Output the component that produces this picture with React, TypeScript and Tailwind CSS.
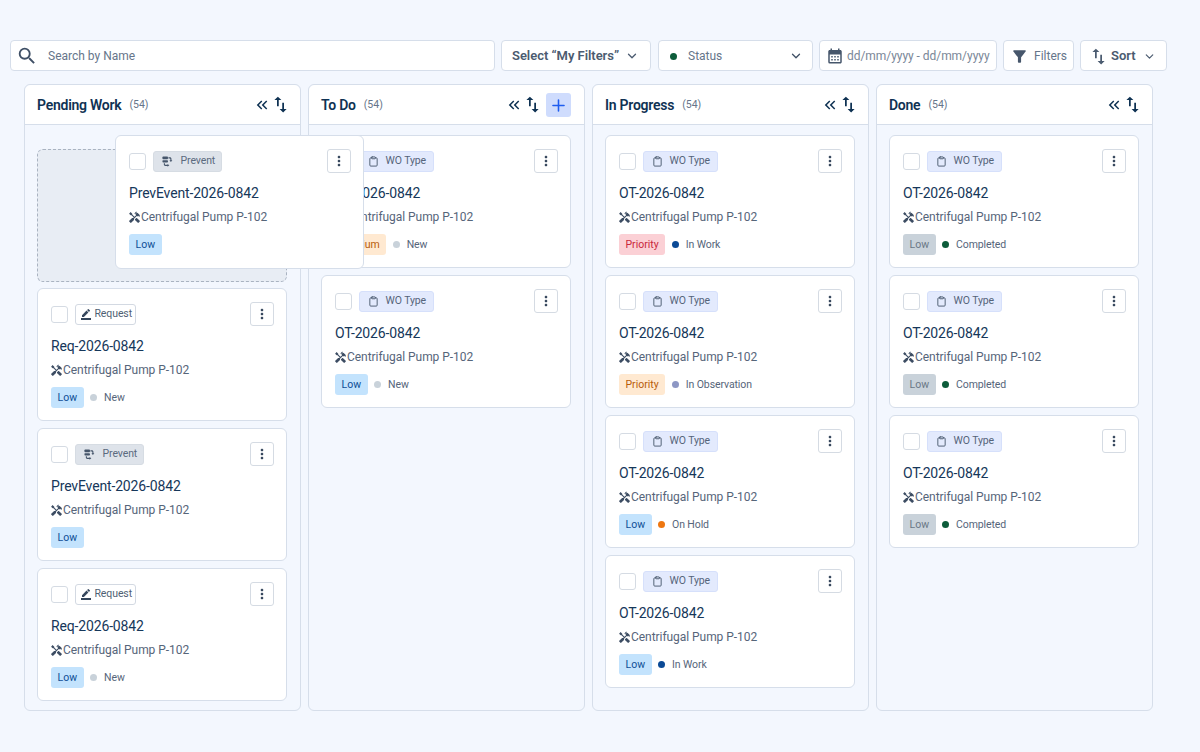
import React from "react";
import { ChevronDown, Plus, Clipboard } from "lucide-react";
import { MdSearch, MdCalendarMonth, MdFilterAlt, MdHandyman, MdBorderColor, MdMoreVert, MdKeyboardDoubleArrowLeft, MdSwapVert } from "react-icons/md";

const PreventIcon = () => (
  <svg width="11" height="11" viewBox="0 0 12 12" fill="#46566b" className="shrink-0">
    <rect x="0.5" y="0.5" width="6" height="3" rx="0.8" />
    <rect x="0.5" y="4.5" width="6" height="2.6" rx="0.8" />
    <path d="M8 1.2h1.6c1 0 1.7.7 1.7 1.7v1.4h1l-1.6 2-1.6-2h1V3c0-.3-.2-.5-.5-.5H8z" transform="translate(-1 .2)" />
    <path d="M6 10.8H3.6c-1 0-1.6-.6-1.6-1.5V8h1.2v1.2c0 .2.2.4.4.4H6V8.6l2 1.6-2 1.6z" />
  </svg>
);

type Card = { type: "wo" | "req" | "prev"; title: string; prio: string; status?: string; dot?: string };

const prioStyles: Record<string, string> = {
  Low: "bg-[#c3e3fd] text-[#0f4f96]",
  Grey: "bg-[#c9d2da] text-[#6a7886]",
  Priority: "bg-[#fbd0d5] text-[#c9283c]",
  Amber: "bg-[#ffe9d1] text-[#b85c0a]",
  Medium: "bg-[#ffe9d1] text-[#b85c0a]",
};

const TypeTag = ({ type }: { type: Card["type"] }) => {
  if (type === "req")
    return (
      <div className="flex h-[21px] w-[61px] items-center gap-[3px] rounded-[3px] border border-[#d3d9e2] bg-white pl-[4px] text-[10.5px] tracking-[-0.1px] text-[#4f5f74]">
        <MdBorderColor size={12} className="text-[#35465c]" />
        <span>Request</span>
      </div>
    );
  if (type === "prev")
    return (
      <div className="flex h-[21px] w-[69px] items-center gap-[8px] rounded-[3px] border border-[#d6dce3] bg-[#dee3ea] pl-[8px] text-[10.5px] tracking-[-0.1px] text-[#5b6a7e]">
        <PreventIcon />
        <span>Prevent</span>
      </div>
    );
  return (
    <div className="flex h-[21px] w-[75px] items-center gap-[7px] rounded-[3px] border border-[#d6e0fb] bg-[#e3eafd] pl-[8px] text-[10.5px] tracking-[-0.1px] text-[#55647a]">
      <Clipboard size={11} strokeWidth={2} className="text-[#46566b]" />
      <span>WO Type</span>
    </div>
  );
};

const KanbanCard = ({ card }: { card: Card }) => (
  <div className="h-[133px] rounded-[6px] border border-[#d6deea] bg-white pl-[13px] pr-[12px] pt-[13px]">
    <CardBody card={card} />
  </div>
);

const CardBody = ({ card }: { card: Card }) => {
  const label = card.prio === "Grey" ? "Low" : card.prio === "Amber" ? "Priority" : card.prio;
  return (
    <>
      <div className="flex h-[24px] items-center justify-between">
        <div className="flex items-center gap-[6.5px]">
          <div className="h-[17px] w-[17px] rounded-[3px] border border-[#d5dbe3] bg-white" />
          <TypeTag type={card.type} />
        </div>
        <button className="flex h-[24px] w-[24px] items-center justify-center rounded-[3px] border border-[#d5dbe3] bg-white text-[#35465c]">
          <MdMoreVert size={16} />
        </button>
      </div>
      <div className="mt-[10px] text-[14px] leading-[20px] tracking-[-0.15px] text-[#16375a]">{card.title}</div>
      <div className="mt-[3px] flex h-[21px] items-center pt-px text-[12px] tracking-[-0.05px] text-[#56657a]">
        <MdHandyman size={13} className="-ml-px text-[#3d4d63]" />
        <span>Centrifugal Pump P-102</span>
      </div>
      <div className="mt-[7px] flex h-[21px] items-center">
        <span className={`flex h-[21px] items-center rounded-[3px] px-[6.5px] text-[10.5px] ${prioStyles[card.prio]}`}>{label}</span>
        {card.status && (
          <>
            <span className={`ml-[6.5px] h-[7px] w-[7px] rounded-full ${card.dot}`} />
            <span className="ml-[7px] text-[10.5px] tracking-[-0.1px] text-[#56657a]">{card.status}</span>
          </>
        )}
      </div>
    </>
  );
};

const wo = (prio: string, status: string, dot: string): Card => ({ type: "wo", title: "OT-2026-0842", prio, status, dot });
const req: Card = { type: "req", title: "Req-2026-0842", prio: "Low", status: "New", dot: "bg-[#c9d2da]" };
const prev: Card = { type: "prev", title: "PrevEvent-2026-0842", prio: "Low" };
const done = wo("Grey", "Completed", "bg-[#0d5c3a]");

const columns: { name: string; plus?: boolean; placeholder?: boolean; cards: Card[] }[] = [
  { name: "Pending Work", placeholder: true, cards: [req, prev, req] },
  {
    name: "To Do",
    plus: true,
    cards: [wo("Medium", "New", "bg-[#c9d2da]"), wo("Low", "New", "bg-[#c9d2da]")],
  },
  {
    name: "In Progress",
    cards: [
      wo("Priority", "In Work", "bg-[#0b4a96]"),
      wo("Amber", "In Observation", "bg-[#8d97c4]"),
      wo("Low", "On Hold", "bg-[#ee7711]"),
      wo("Low", "In Work", "bg-[#0b4a96]"),
    ],
  },
  { name: "Done", cards: [done, done, done] },
];

const Box = ({ className = "", children }: { className?: string; children: React.ReactNode }) => (
  <div className={`flex h-[31px] items-center rounded-[4px] border border-[#d6deea] bg-white pt-px ${className}`}>{children}</div>
);

export default function App() {
  return (
    <div className="relative h-[752px] w-[1200px] overflow-hidden bg-[#f3f7fe] pt-[40px] font-['Roboto',sans-serif]">
      <div className="flex gap-[6px] pl-[10px]">
        <Box className="w-[485px] pl-[5px] text-[12px] text-[#66758a]">
          <MdSearch size={22} className="text-[#3f4f65]" />
          <span className="ml-[10px]">Search by Name</span>
        </Box>
        <Box className="w-[150px] justify-between pl-[10px] pr-[11px] text-[13px] font-semibold tracking-[-0.03px] text-[#4b5b70]">
          <span>Select “My Filters”</span>
          <ChevronDown size={14} strokeWidth={2.2} />
        </Box>
        <Box className="ml-px w-[155px] pl-[11px] pr-[9px] text-[12px] text-[#66758a]">
          <span className="h-[7px] w-[7px] rounded-full bg-[#0d5c3a]" />
          <span className="ml-[11px] flex-1">Status</span>
          <ChevronDown size={14} strokeWidth={2.2} className="text-[#3f4f65]" />
        </Box>
        <Box className="w-[178px] pl-[6px] text-[12px] tracking-[-0.05px] text-[#7a8798]">
          <MdCalendarMonth size={18} className="text-[#46566b]" />
          <span className="ml-[3px] whitespace-nowrap">dd/mm/yyyy - dd/mm/yyyy</span>
        </Box>
        <Box className="w-[71px] pl-[6px] text-[12px] text-[#66758a]">
          <MdFilterAlt size={19} className="text-[#46566b]" />
          <span className="ml-[5px]">Filters</span>
        </Box>
        <Box className="w-[87px] pl-[7px] text-[13px] font-semibold text-[#4b5b70]">
          <MdSwapVert size={21} />
          <span className="ml-[2px]">Sort</span>
          <ChevronDown size={13} strokeWidth={2.2} className="ml-[7px]" />
        </Box>
      </div>

      <div className="mt-[13px] flex gap-[7px] pl-[24px]">
        {columns.map((col) => (
          <div key={col.name} className="h-[627px] w-[277px] rounded-[6px] border border-[#d6deea]">
            <div className="flex h-[40px] items-center rounded-t-[6px] border-b border-[#d6deea] bg-white pl-[12px] pr-[13px] pt-[1px]">
              <span className="text-[14px] font-semibold tracking-[-0.25px] text-[#0f3253]">{col.name}</span>
              <span className="ml-[8px] text-[10.5px] text-[#66758a]">(54)</span>
              <div className="ml-auto flex items-center text-[#0f3253]">
                <MdKeyboardDoubleArrowLeft size={18} className="-mr-px -mt-px" />
                <MdSwapVert size={21} className="-mr-[4px] -mt-px" />
                {col.plus && (
                  <div className="-my-1 ml-[7px] flex h-[24px] w-[25px] items-center justify-center rounded-[3px] bg-[#cfdcfd] text-[#1f5df0]">
                    <Plus size={19} strokeWidth={2} />
                  </div>
                )}
              </div>
            </div>
            <div className="flex flex-col gap-[7px] pl-[12px] pr-[13px] pt-[10px]">
              {col.placeholder && (
                <div className="-mb-px mt-[14px] h-[133px] rounded-[6px] border border-dashed border-[#a9b3c1] bg-[#e8edf4]" />
              )}
              {col.cards.map((c, i) => (
                <KanbanCard key={i} card={c} />
              ))}
            </div>
          </div>
        ))}
      </div>

      <div className="absolute left-[115px] top-[135px] h-[134px] w-[249px] rounded-[6px] border border-[#d6deea] bg-white pl-[13px] pr-[12px] pt-[13px]">
        <CardBody card={prev} />
      </div>
    </div>
  );
}
